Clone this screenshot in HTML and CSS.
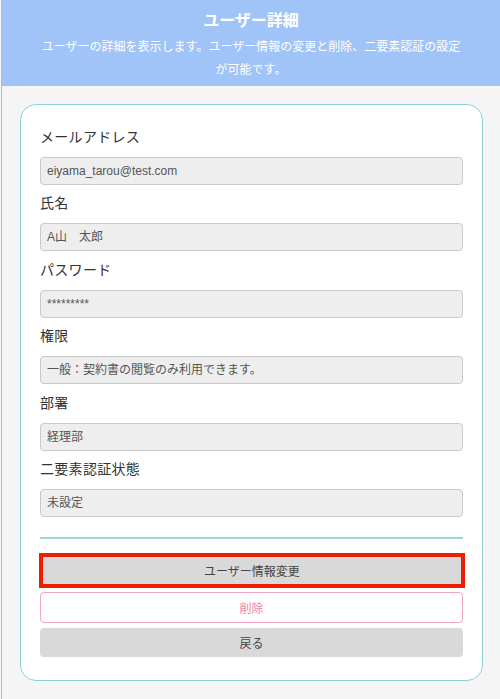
FILE: index.html
```html
<!DOCTYPE html>
<html lang="ja">
<head>
<meta charset="utf-8">
<title>ユーザー詳細</title>
<link rel="stylesheet" href="styles.css">
</head>
<body>
<div class="page">
  <header class="header">
    <h1 class="title">ユーザー詳細</h1>
    <p class="subtitle">ユーザーの詳細を表示します。ユーザー情報の変更と削除、二要素認証の設定が可能です。</p>
  </header>
  <main class="card">
    <div class="field">
      <div class="label">メールアドレス</div>
      <div class="input input-latin">eiyama_tarou@test.com</div>
    </div>
    <div class="field">
      <div class="label">氏名</div>
      <div class="input">A山　太郎</div>
    </div>
    <div class="field">
      <div class="label">パスワード</div>
      <div class="input input-latin">*********</div>
    </div>
    <div class="field">
      <div class="label">権限</div>
      <div class="input">一般：契約書の閲覧のみ利用できます。</div>
    </div>
    <div class="field">
      <div class="label">部署</div>
      <div class="input">経理部</div>
    </div>
    <div class="field">
      <div class="label">二要素認証状態</div>
      <div class="input">未設定</div>
    </div>
    <hr class="divider">
    <div class="actions">
      <button class="btn btn-edit">ユーザー情報変更</button>
      <button class="btn btn-delete">削除</button>
      <button class="btn btn-back">戻る</button>
    </div>
  </main>
</div>
</body>
</html>
```
FILE: styles.css
```css
html, body {
  margin: 0;
  padding: 0;
}
body {
  background: #f5f5f5;
  font-family: "Liberation Sans", "Noto Sans CJK JP", sans-serif;
  color: #333;
}
.page {
  margin-left: 1px;
  border-left: 1px solid #bcbcbc;
  min-height: 699px;
  box-sizing: border-box;
  padding-bottom: 20px;
}
.header {
  background: #a0c4f8;
  height: 86px;
  box-sizing: border-box;
  padding-top: 9px;
  text-align: center;
  color: #fff;
}
.title {
  margin: 0;
  font-size: 16px;
  line-height: 24px;
  font-weight: bold;
}
.subtitle {
  margin: 3px auto 0;
  width: 426px;
  font-size: 12px;
  line-height: 23px;
}
.card {
  margin: 18px 17px 0 18px;
  background: #fff;
  border: 1px solid #8fd0d3;
  border-radius: 16px;
  padding: 22px 19px 23px 19px;
}
.field {
  margin-bottom: 8.4px;
}
.label {
  font-size: 14px;
  line-height: 20px;
  color: #333;
  margin-bottom: 10px;
  letter-spacing: 0.3px;
}
.input {
  height: 28px;
  box-sizing: border-box;
  background: #eeeeee;
  border: 1px solid #c9c9c9;
  border-radius: 4px;
  padding: 0 6px;
  font-size: 12px;
  line-height: 26px;
  color: #555;
}
.divider {
  border: 0;
  border-top: 2px solid #9fd5d8;
  margin: 20px 0 0;
  height: 0;
}
.actions {
  display: flex;
  flex-direction: column;
  margin-top: 14.5px;
}
.btn {
  display: block;
  width: 100%;
  box-sizing: border-box;
  font-family: "Liberation Sans", "Noto Sans CJK JP", sans-serif;
  font-size: 12px;
  color: #444;
  border-radius: 4px;
  padding: 0;
  cursor: pointer;
}
.btn-edit {
  height: 35px;
  background: #d9d9d9;
  border: 4px solid #f01e00;
  border-radius: 0;
  margin-left: -1px;
  width: calc(100% + 3px);
}
.btn-delete {
  margin-top: 3.3px;
  height: 31.6px;
  background: #fff;
  border: 1px solid #f3a4c4;
  color: #e884ab;
}
.btn-back {
  margin-top: 5px;
  height: 29px;
  background: #d9d9d9;
  border: 0;
}
```
